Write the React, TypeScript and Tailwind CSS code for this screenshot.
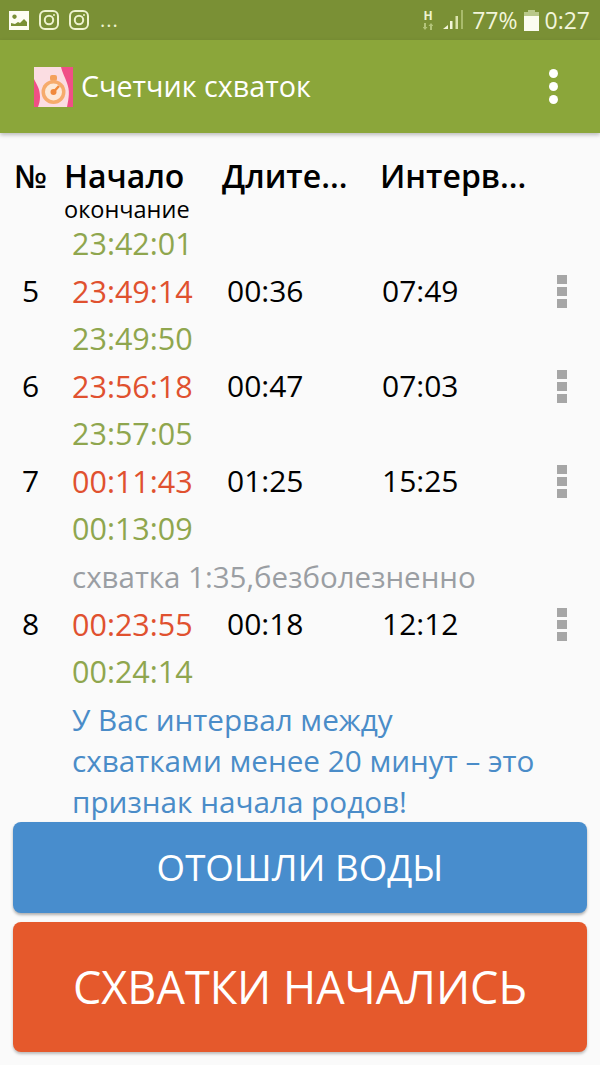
import React from "react";

const FONT = "font-['Open_Sans','Noto_Sans',sans-serif]";

function Kebab() {
  return (
    <div className="flex flex-col gap-[3px] items-start pl-[2px]">
      <span className="block w-[10px] h-[9px] bg-[#a6a6a6]" />
      <span className="block w-[10px] h-[9px] bg-[#a6a6a6]" />
      <span className="block w-[10px] h-[9px] bg-[#a6a6a6]" />
    </div>
  );
}

function Insta() {
  return (
    <svg width="20" height="20" viewBox="0 0 20 20" fill="none" stroke="#eef3cf" strokeWidth="2">
      <rect x="1" y="1" width="18" height="18" rx="5" />
      <circle cx="10" cy="10" r="4.2" />
      <circle cx="15" cy="5" r="0.6" fill="#eef3cf" strokeWidth="1" />
    </svg>
  );
}

function StatusBar() {
  return (
    <div className="h-10 bg-[#7a9035] flex items-center justify-between pl-[9px] pr-[10px] shrink-0">
      <div className="flex items-center gap-[10px]">
        <svg width="20" height="19" viewBox="0 0 20 19">
          <path fillRule="evenodd" fill="#fdfdf2" d="M0 0H20V19H0Z M5.5 3.5a2.2 2.2 0 1 0 0.01 0Z M2 15h16l0-4-3-3-4 4-2-1-3 2-4-1Z" />
        </svg>
        <Insta />
        <Insta />
        <span className="text-[#eef3cf] text-[20px] leading-none tracking-[1px] ml-[1px]">...</span>
      </div>
      <div className="flex items-center">
        <div className="flex flex-col items-center gap-[2px] mr-[10px] w-[10px] -mt-[1px]">
          <span className="text-[#eef3cf] text-[12px] leading-[11px] font-bold">H</span>
          <svg width="10" height="7" viewBox="0 0 10 7" fill="#b3c47a">
            <path d="M1 0H3V4H4.5L2 7L-0.5 4H1Z" />
            <path d="M7 7H9V3H10.5L8 0L5.5 3H7Z" />
          </svg>
        </div>
        <svg width="22" height="20" viewBox="0 0 22 20" className="mr-[7px]">
          <path d="M0 19 L5 15 V19 Z" fill="#f2f5da" />
          <rect x="7" y="11" width="2.5" height="8" fill="#f2f5da" />
          <rect x="12.5" y="6" width="2.5" height="13" fill="#dbe3ae" />
          <rect x="18" y="0" width="2" height="19" fill="#a9bb6c" />
        </svg>
        <span className={`${FONT} text-[#f2f5da] text-[23px] leading-none mr-[6px]`}>77%</span>
        <svg width="15" height="21" viewBox="0 0 15 21" className="mr-[6px]">
          <path d="M4 0H11V2H15V21H0V2H4Z" fill="#b9c88a" />
          <rect x="0" y="6" width="15" height="15" fill="#fbfcf0" />
        </svg>
        <span className={`${FONT} text-[#f2f5da] text-[23px] leading-none`}>0:27</span>
      </div>
    </div>
  );
}

function AppBar() {
  return (
    <div className="h-[93px] bg-[#8ba63a] flex items-center pl-[34px] pr-[42px] shrink-0 shadow-[0_2px_4px_rgba(0,0,0,0.25)] relative">
      <svg width="39" height="40" viewBox="0 0 39 40" className="mr-[8px]">
        <rect width="39" height="40" fill="#fbdde2" />
        <path d="M27 0H39V40H33C35 30 36 24 33 16C31 10 28 5 27 0Z" fill="#f04f86" />
        <path d="M0 12C3 18 6 22 6 30C6 34 5 37 4 40H0Z" fill="#f04f86" />
        <rect x="16" y="8" width="7" height="6" rx="2" fill="#f4a15c" />
        <circle cx="19.5" cy="25" r="12" fill="#f6ab6c" />
        <circle cx="19.5" cy="25" r="8.5" fill="#fde9d8" />
        <path d="M19.5 25 L25 19" stroke="#f08a3c" strokeWidth="2.5" />
        <circle cx="19.5" cy="25" r="3" fill="#f08a3c" />
      </svg>
      <span className={`${FONT} text-white text-[28.7px] leading-none flex-1`}>Счетчик схваток</span>
      <div className="flex flex-col gap-[4px]">
        <span className="block w-[9px] h-[9px] rounded-full bg-white" />
        <span className="block w-[9px] h-[9px] rounded-full bg-white" />
        <span className="block w-[9px] h-[9px] rounded-full bg-white" />
      </div>
    </div>
  );
}

const GRID = "grid grid-cols-[64px_158px_158px_175px_45px] items-center";

const TIME = "text-[30.5px] leading-[47.5px] pl-[8px]";

function Row({ n, start, end, dur, gap, startColor }: { n: string; start: string; end: string; dur: string; gap: string; startColor: string }) {
  return (
    <div>
      <div className={`${GRID} h-[47.5px] text-black`}>
        <span className="text-[30px] leading-none pl-[22px]">{n}</span>
        <span className={`${TIME} ${startColor}`}>{start}</span>
        <span className="text-[30px] leading-none pl-[5px]">{dur}</span>
        <span className="text-[30px] leading-none pl-[2px]">{gap}</span>
        <Kebab />
      </div>
      <div className={`${GRID} h-[47.5px]`}>
        <span />
        <span className={`${TIME} text-[#8fa64e]`}>{end}</span>
      </div>
    </div>
  );
}

export default function App() {
  return (
    <div className={`${FONT} w-[600px] h-[1065px] bg-[#fafafa] flex flex-col overflow-hidden`}>
      <StatusBar />
      <AppBar />
      <div className="flex-1 flex flex-col min-h-0">
        <div className={`${GRID} h-[38px] mt-[24px] text-black font-semibold text-[32px] leading-none`}>
          <span className="pl-[14px]">№</span>
          <span>Начало</span>
          <span>Длите...</span>
          <span>Интерв...</span>
        </div>
        <div className="pl-[64px] mt-[3px] h-[22px] text-[23.5px] leading-[22px] text-black">окончание</div>
        <div className={`${GRID} h-[47.5px]`}>
          <span />
          <span className={`${TIME} text-[#8fa64e]`}>23:42:01</span>
        </div>
        <Row n="5" start="23:49:14" end="23:49:50" dur="00:36" gap="07:49" startColor="text-[#e0512f]" />
        <Row n="6" start="23:56:18" end="23:57:05" dur="00:47" gap="07:03" startColor="text-[#e0512f]" />
        <Row n="7" start="00:11:43" end="00:13:09" dur="01:25" gap="15:25" startColor="text-[#e0512f]" />
        <div className="pl-[72px] text-[29.5px] leading-[48px] text-[#9a9ea3] whitespace-nowrap">схватка 1:35,безболезненно</div>
        <Row n="8" start="00:23:55" end="00:24:14" dur="00:18" gap="12:12" startColor="text-[#e0512f]" />
        <div className="pl-[72px] text-[29.7px] leading-[41px] text-[#4a8cc8] mt-[3px] whitespace-nowrap">
          <div>У Вас интервал между</div>
          <div>схватками менее 20 минут – это</div>
          <div>признак начала родов!</div>
        </div>
      </div>
      <div className="px-[13px] pb-[13px] flex flex-col gap-[9px] shrink-0">
        <div className="h-[91px] rounded-[8px] bg-[#488dcd] shadow-[0_2px_3px_rgba(0,0,0,0.3)] flex items-center justify-center text-white text-[36.7px]">
          ОТОШЛИ ВОДЫ
        </div>
        <div className="h-[130px] rounded-[8px] bg-[#e5592c] shadow-[0_2px_3px_rgba(0,0,0,0.25)] flex items-center justify-center text-white text-[45px]">
          СХВАТКИ НАЧАЛИСЬ
        </div>
      </div>
    </div>
  );
}
